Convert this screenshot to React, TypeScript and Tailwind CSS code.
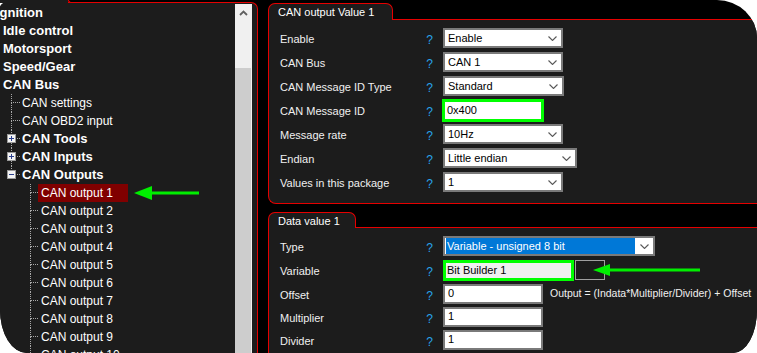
import React from "react";

const RED = "border-[#e60000]";
const DOT = "border-dotted border-[#a8a8a8]";

function Chevron() {
  return (
    <svg width="9" height="5" viewBox="0 0 9 5" className="shrink-0">
      <polyline points="0.5,0.5 4.5,4.5 8.5,0.5" fill="none" stroke="#5a5a5a" strokeWidth="1.1" />
    </svg>
  );
}

function Select({ value, w }: { value: string; w: string }) {
  return (
    <div className={`flex h-[20px] shrink-0 items-center justify-between border-2 border-[#7a7a7a] bg-white pl-[3px] pr-[4px] text-black ${w}`}>
      <span>{value}</span>
      <Chevron />
    </div>
  );
}

function Input({ value }: { value: string }) {
  return (
    <div className="flex h-[20px] w-[100px] shrink-0 items-center border-2 border-[#7a7a7a] bg-white pl-[3px] text-black">
      {value}
    </div>
  );
}

function Row({ label, h, children }: { label: string; h: string; children: React.ReactNode }) {
  return (
    <div className={`flex items-center ${h}`}>
      <div className="w-[142px] shrink-0 pt-[3px] text-[#f0f0f0]">{label}</div>
      <div className="w-[15px] shrink-0 pt-[4px] text-center text-[12px] text-[#27a2ea]">?</div>
      <div className="ml-[6px] flex shrink-0 items-center">{children}</div>
    </div>
  );
}

function Tab({ title, w }: { title: string; w: string }) {
  return (
    <div className="flex h-[17px] shrink-0">
      <div className={`flex shrink-0 items-center rounded-t-[7px] border-t border-l border-r ${RED} bg-[#1c1c1c] pl-[9px] pt-[1px] text-white ${w}`}>
        {title}
      </div>
      <div className={`flex-1 border-b ${RED}`} />
    </div>
  );
}

function TopItem({ label, shift }: { label: string; shift?: boolean }) {
  return (
    <div className={`flex h-[18px] items-center text-[13px] font-bold text-white ${shift ? "pl-0 -ml-[4px]" : "pl-[3px]"}`}>
      {label}
    </div>
  );
}

function Box({ plus }: { plus: boolean }) {
  return (
    <div className="absolute left-[-4px] top-[4px] flex h-[9px] w-[9px] items-center justify-center border border-[#9a9a9a] bg-[#f4f4f4]">
      <svg width="7" height="7" viewBox="0 0 7 7">
        <rect x="1" y="3" width="5" height="1" fill="#2a3f8f" />
        {plus && <rect x="3" y="1" width="1" height="5" fill="#2a3f8f" />}
      </svg>
    </div>
  );
}

function ChildItem({ label, bold, box, last }: { label: string; bold?: boolean; box?: "plus" | "minus"; last?: boolean }) {
  return (
    <div className="flex h-[18px]">
      <div className="w-[11px]" />
      <div className="relative flex w-[9px] flex-col">
        <div className={`h-[9px] border-l border-b ${DOT}`} />
        <div className={`h-[9px] ${last ? "" : `border-l ${DOT}`}`} />
        {box && <Box plus={box === "plus"} />}
      </div>
      <div className={`ml-[2px] flex items-center text-white ${bold ? "text-[13px] font-bold" : "text-[12px]"}`}>{label}</div>
    </div>
  );
}

function GrandItem({ label, selected }: { label: string; selected?: boolean }) {
  return (
    <div className="flex h-[18px] shrink-0">
      <div className="w-[30px]" />
      <div className="flex w-[8px] flex-col">
        <div className={`h-[9px] border-l border-b ${DOT}`} />
        <div className={`h-[9px] border-l ${DOT}`} />
      </div>
      <div className={`flex items-center pl-[3px] text-[12px] text-white ${selected ? "w-[90px] bg-[#800000]" : ""}`}>{label}</div>
    </div>
  );
}

export default function App() {
  const outputs = Array.from({ length: 10 }, (_, i) => `CAN output ${i + 1}`);
  return (
    <div className="relative h-[353px] w-[757px] overflow-hidden bg-white font-['Liberation_Sans',Arial,sans-serif] text-[11px]">
      <div className="flex h-full w-full overflow-hidden rounded-tl-[17px_8px] rounded-tr-[40px_38px] rounded-br-[24px_43px] rounded-bl-[27px_43px] bg-black">
        {/* Left tree panel */}
        <div className={`mt-[2px] flex w-[258px] shrink-0 rounded-tr-[7px] border-t border-r ${RED} bg-[#1c1c1c] pt-[1px]`}>
          <div className="flex w-[235px] flex-col overflow-hidden">
            <TopItem label="Ignition" shift />
            <TopItem label="Idle control" />
            <TopItem label="Motorsport" />
            <TopItem label="Speed/Gear" />
            <TopItem label="CAN Bus" />
            <ChildItem label="CAN settings" />
            <ChildItem label="CAN OBD2 input" />
            <ChildItem label="CAN Tools" bold box="plus" />
            <ChildItem label="CAN Inputs" bold box="plus" />
            <ChildItem label="CAN Outputs" bold box="minus" last />
            {outputs.map((o, i) => (
              <GrandItem key={o} label={o} selected={i === 0} />
            ))}
          </div>
          <div className="flex w-[17px] flex-col bg-[#f0f0f0]">
            <div className="flex h-[17px] items-center justify-center">
              <svg width="9" height="6" viewBox="0 0 9 6">
                <polyline points="1,5 4.5,1.5 8,5" fill="none" stroke="#606060" strokeWidth="1.8" />
              </svg>
            </div>
            <div className="h-[47px]" />
            <div className="mr-[1px] flex-1 bg-[#cdcdcd]" />
          </div>
          <div className="w-[5px]" />
        </div>

        <div className="w-[10px] shrink-0" />

        {/* Right panels */}
        <div className="flex min-w-0 flex-1 flex-col pt-[3px]">
          <Tab title="CAN output Value 1" w="w-[125px]" />
          <div className={`rounded-bl-[8px] border-l border-b ${RED} bg-[#1c1c1c] pt-[6px] pb-[9px] pl-[11px]`}>
            <Row label="Enable" h="h-[24px]"><Select value="Enable" w="w-[120px]" /></Row>
            <Row label="CAN Bus" h="h-[24px]"><Select value="CAN 1" w="w-[120px]" /></Row>
            <Row label="CAN Message ID Type" h="h-[24px]"><Select value="Standard" w="w-[121px]" /></Row>
            <Row label="CAN Message ID" h="h-[24px]">
              <div className="-ml-[1px] flex h-[23px] w-[102px] items-center border-[3px] border-[#00ff00] bg-white pl-[2px] text-black">0x400</div>
            </Row>
            <Row label="Message rate" h="h-[24px]"><Select value="10Hz" w="w-[120px]" /></Row>
            <Row label="Endian" h="h-[24px]"><Select value="Little endian" w="w-[134px]" /></Row>
            <Row label="Values in this package" h="h-[24px]"><Select value="1" w="w-[120px]" /></Row>
          </div>

          <div className="mt-[8px] flex flex-1 flex-col">
            <div className="flex h-[16px] shrink-0">
              <div className={`flex w-[88px] shrink-0 items-center rounded-t-[7px] border-t border-l border-r ${RED} bg-[#1c1c1c] pl-[9px] pt-[1px] text-white`}>
                Data value 1
              </div>
              <div className={`flex-1 border-b ${RED}`} />
            </div>
            <div className={`flex-1 border-l ${RED} bg-[#1c1c1c] pt-[6px] pl-[11px]`}>
              <Row label="Type" h="h-[24px]">
                <div className="flex h-[20px] w-[212px] items-center border-2 border-[#7a7a7a] bg-white p-[1px] pr-[4px]">
                  <div className="flex h-[16px] w-[189px] items-center bg-[#0078d7] pl-[1px] text-white">Variable - unsigned 8 bit</div>
                  <div className="ml-auto flex"><Chevron /></div>
                </div>
              </Row>
              <Row label="Variable" h="h-[24px]">
                <div className="flex h-[21px] w-[131px] items-center border-[3px] border-[#00ff00] bg-[#f0f0f0] pl-[1px] text-black">Bit Builder 1</div>
                <div className="ml-[1px] h-[20px] w-[30px] border border-[#a0a0a0] bg-[#1c1c1c]" />
              </Row>
              <Row label="Offset" h="h-[23px]">
                <Input value="0" />
                <span className="ml-[7px] whitespace-nowrap text-[10.5px] text-[#f0f0f0]">Output = (Indata*Multiplier/Divider) + Offset</span>
              </Row>
              <Row label="Multiplier" h="h-[23px]"><Input value="1" /></Row>
              <Row label="Divider" h="h-[23px]"><Input value="1" /></Row>
            </div>
          </div>
        </div>
      </div>

      {/* tab remnant at top-left of tree panel */}
      <div className="absolute left-0 top-0 h-[3px] w-[68px] bg-[#1c1c1c]" />
      <div className={`absolute left-[68px] top-0 h-[3px] w-[8px] rounded-bl-[4px] border-l border-b ${RED} bg-black`} />

      {/* green arrows */}
      <svg className="absolute left-[133px] top-[185px]" width="67" height="16" viewBox="0 0 67 16">
        <polygon points="1,8 19,1 19,15" fill="#00ee00" />
        <rect x="18" y="6.5" width="48" height="3" fill="#00ee00" />
      </svg>
      <svg className="absolute left-[592px] top-[263px]" width="109" height="14" viewBox="0 0 109 14">
        <polygon points="1,7 18,1 18,13" fill="#00ee00" />
        <rect x="17" y="5.5" width="91" height="3" fill="#00ee00" />
      </svg>
    </div>
  );
}
